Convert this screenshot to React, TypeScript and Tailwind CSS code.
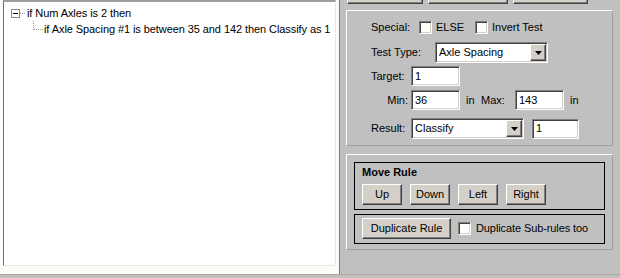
import type { ReactNode } from "react";

const sunken =
  "border border-t-[#808080] border-l-[#808080] border-b-white border-r-white shadow-[inset_1px_1px_0_#404040,inset_-1px_-1px_0_#d4d0c8]";
const raised =
  "border border-t-white border-l-white border-b-[#404040] border-r-[#404040] shadow-[inset_-1px_-1px_0_#808080] bg-[#d4d0c8]";

function Button({ label, w }: { label: string; w: string }) {
  return (
    <div className={`flex h-[21px] shrink-0 items-center justify-center ${w} ${raised}`}>
      {label}
    </div>
  );
}

function Check() {
  return <span className={`block h-[13px] w-[13px] shrink-0 bg-[#fffffb] ${sunken}`} />;
}

function TextBox({ value, w }: { value: string; w: string }) {
  return (
    <div className={`flex h-[20px] shrink-0 items-center bg-white pl-[3px] ${w} ${sunken}`}>
      {value}
    </div>
  );
}

function Select({ value, w }: { value: string; w: string }) {
  return (
    <div className={`flex h-[21px] shrink-0 items-center bg-white p-[1px] ${w} ${sunken}`}>
      <span className="flex-1 pl-[2px]">{value}</span>
      <span className={`flex h-[17px] w-[16px] items-center justify-center ${raised}`}>
        <svg width="7" height="4" viewBox="0 0 7 4">
          <path d="M0 0h7L3.5 4z" fill="#000" />
        </svg>
      </span>
    </div>
  );
}

function Row({ children, className = "" }: { children: ReactNode; className?: string }) {
  return <div className={`flex items-center ${className}`}>{children}</div>;
}

export default function App() {
  return (
    <div className="flex h-[278px] w-[620px] flex-col overflow-hidden bg-[#c0c0c0] font-['Liberation_Sans',Arial,sans-serif] text-[11px] leading-[13px] text-black">
      <div className="flex h-[274px]">
        {/* tree view */}
        <div className="w-[340px] shrink-0 border-r border-r-[#7a7a7a] bg-[#fbfbf9] px-[3px] pb-[8px]">
          <div className="h-full overflow-hidden whitespace-nowrap border-t-2 border-l border-b border-r border-t-[#a09f99] border-l-[#716f64] border-b-[#ece9d8] border-r-[#ece9d8] bg-white pt-[3px] tracking-[-0.08px]">
            <div className="flex h-[16px] items-center pl-[7px]">
              <span className="flex h-[9px] w-[9px] items-center justify-center border border-[#8a8a8a] bg-white">
                <span className="block h-px w-[5px] bg-black" />
              </span>
              <span className="w-[5px] border-b border-dotted border-[#9a9a9a]" />
              <span className="ml-[2px]">if Num Axles is 2 then</span>
            </div>
            <div className="flex h-[16px] items-start pl-[29px]">
              <span className="h-[9px] w-[10px] border-l border-b border-dotted border-[#9a9a9a]" />
              <span className="ml-px self-center">
                if Axle Spacing #1 is between 35 and 142 then Classify as 1
              </span>
            </div>
          </div>
        </div>

        {/* editor panel */}
        <div className="flex-1">
          <div className="flex h-[4px] items-end gap-[5px] overflow-hidden pl-[7px]">
            <div className={`h-[24px] w-[76px] shrink-0 ${raised}`} />
            <div className={`h-[24px] w-[80px] shrink-0 ${raised}`} />
            <div className={`h-[24px] w-[75px] shrink-0 ${raised}`} />
          </div>

          <div className="ml-[6px] mr-[7px] mt-[6px] border border-t-white border-l-white border-b-[#a0a09a] border-r-[#a0a09a] pb-[6px] pt-[10px]">
            <Row className="h-[13px] pl-[24px]">
              <span className="w-[48px]">Special:</span>
              <Check />
              <span className="ml-[4px] w-[39px]">ELSE</span>
              <Check />
              <span className="ml-[4px]">Invert Test</span>
            </Row>
            <Row className="mt-[8px] pl-[24px]">
              <span className="w-[64px]">Test Type:</span>
              <Select value="Axle Spacing" w="w-[113px]" />
            </Row>
            <Row className="mt-[3px] pl-[24px]">
              <span className="w-[40px]">Target:</span>
              <TextBox value="1" w="w-[49px]" />
            </Row>
            <Row className="mt-[4px] pl-[24px]">
              <span className="w-[40px] pr-[3px] text-right">Min:</span>
              <TextBox value="36" w="w-[49px]" />
              <span className="ml-[6px] w-[15px]">in</span>
              <span className="w-[34px]">Max:</span>
              <TextBox value="143" w="w-[49px]" />
              <span className="ml-[6px]">in</span>
            </Row>
            <Row className="mt-[8px] pl-[24px]">
              <span className="w-[40px]">Result:</span>
              <Select value="Classify" w="w-[113px]" />
              <span className="ml-[8px]">
                <TextBox value="1" w="w-[47px]" />
              </span>
            </Row>
          </div>

          <div className="ml-[6px] mr-[7px] mt-[8px] border border-t-white border-l-white border-b-[#a0a09a] border-r-[#a0a09a] px-[7px] pb-[5px] pt-[7px]">
            <div className="border border-black pb-[4px] pl-[7px] pt-[3px]">
              <div className="h-[13px] font-bold">Move Rule</div>
              <div className="mt-[5px] flex gap-[8px]">
                <Button label="Up" w="w-[40px]" />
                <Button label="Down" w="w-[40px]" />
                <Button label="Left" w="w-[40px]" />
                <Button label="Right" w="w-[40px]" />
              </div>
            </div>
            <div className="mt-[4px] flex items-center border border-black pb-[4px] pl-[7px] pt-[3px]">
              <Button label="Duplicate Rule" w="w-[89px]" />
              <span className="ml-[7px]">
                <Check />
              </span>
              <span className="ml-[5px] tracking-[-0.1px]">Duplicate Sub-rules too</span>
            </div>
          </div>
        </div>
      </div>
      <div className="h-[4px] border-t border-t-[#a8a8a0] bg-[#c0c0c0]" />
    </div>
  );
}
